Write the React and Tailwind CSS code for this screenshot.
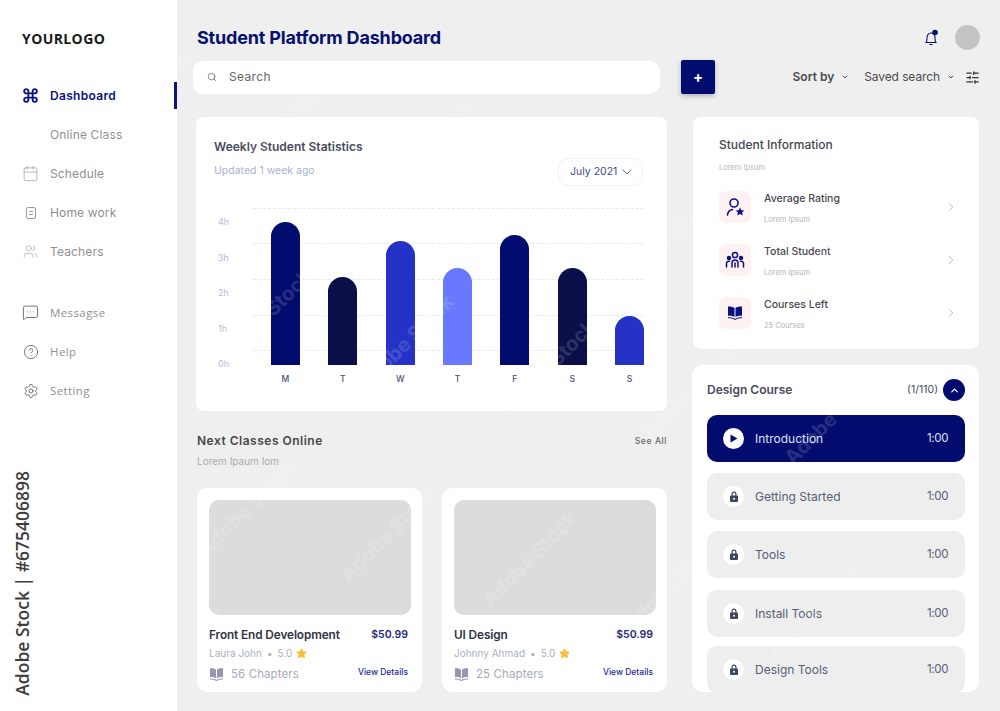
import React from "react";
import { Command, Calendar, Users, MessageSquareMore, CircleHelp, Settings, Search, SlidersHorizontal, ChevronDown, ChevronUp, ChevronRight, Star } from "lucide-react";

const inter = "font-['Inter','Noto_Sans',sans-serif]";

function Doc() {
  return (
    <svg width="14" height="14" viewBox="0 0 14 14" fill="none" stroke="#9a9a9a" strokeWidth="1">
      <rect x="2.5" y="1.5" width="9" height="11" rx="1.5" />
      <path d="M5 5.5h4M5 8.5h4" />
    </svg>
  );
}

function NavItem({ icon, label, active, open }) {
  return (
    <div className="relative flex h-[39px] items-center">
      <div className="flex w-[50px] justify-center pl-[11px]">{icon}</div>
      <span
        className={
          active
            ? "text-[12px] font-semibold tracking-[0.3px] text-[#0b1280]"
            : open
              ? "font-['Open_Sans',sans-serif] text-[11.5px] tracking-[0.4px] text-[#8f8f8f]"
              : "text-[12px] tracking-[0.15px] text-[#8f8f8f]"
        }
      >
        {label}
      </span>
      {active && <div className="absolute right-0 top-[6px] h-[27px] w-[3px] bg-[#0b1280]" />}
    </div>
  );
}

function Sidebar() {
  return (
    <aside className="flex h-[711px] w-[177px] shrink-0 flex-col bg-white">
      <div className="pl-[22px] pt-[29px] font-['Open_Sans',sans-serif] text-[14px] font-bold leading-[20px] tracking-[0.4px] text-[#1a1a1a]">
        YOURLOGO
      </div>
      <nav className="mt-[27px]">
        <NavItem active label="Dashboard" icon={<Command size={17} strokeWidth={2.6} color="#0b1280" />} />
        <NavItem label="Online Class" icon={null} />
        <NavItem label="Schedule" icon={<Calendar size={17} strokeWidth={1} color="#9a9a9a" />} />
        <NavItem label="Home work" icon={<Doc />} />
        <NavItem label="Teachers" icon={<Users size={15} strokeWidth={1} color="#9a9a9a" />} />
      </nav>
      <nav className="mt-[22px]">
        <NavItem open label="Messagse" icon={<MessageSquareMore size={17} strokeWidth={1.3} color="#666666" />} />
        <NavItem open label="Help" icon={<CircleHelp size={16} strokeWidth={1.3} color="#666666" />} />
        <NavItem open label="Setting" icon={<Settings size={16} strokeWidth={1.3} color="#666666" />} />
      </nav>
      <div className="mt-auto mb-[15px] ml-[11px] rotate-180 self-start font-['Open_Sans',sans-serif] text-[17.5px] font-semibold leading-[22px] text-[#3d3d3d] [writing-mode:vertical-rl]">
        Adobe Stock | #675406898
      </div>
    </aside>
  );
}

function Header() {
  return (
    <header className="pr-[20px]">
      <div className="flex h-[60px] items-center justify-between pl-[20px] pt-[15px]">
        <h1 className="text-[18px] font-bold leading-[24px] tracking-[-0.18px] text-[#06106e]">Student Platform Dashboard</h1>
        <div className="flex items-center gap-[15px]">
          <svg width="18" height="18" viewBox="0 0 18 18" fill="none" stroke="#06106e" strokeWidth="1.1">
            <path d="M4 13.5c.8-1 1-2 1-4.5 0-3 1.600-5 4-5s4 2 4 5c0 2.500.2 3.500 1 4.500z" />
            <path d="M7.500 15.500h3" />
            <circle cx="13" cy="3.500" r="2.800" fill="#06106e" stroke="none" />
          </svg>
          <div className="h-[25px] w-[25px] rounded-full bg-[#c4c4c4]" />
        </div>
      </div>
      <div className="flex h-[34px] items-center pl-[16px]">
        <div className="flex h-[33px] w-[467px] items-center rounded-[10px] bg-white pl-[14px]">
          <Search size={10} strokeWidth={1.6} color="#555555" />
          <span className="ml-[12px] text-[12px] tracking-[0.35px] text-[#666666]">Search</span>
        </div>
        <div className="ml-[21px] flex h-[34px] w-[34px] items-center justify-center rounded-[2px] bg-[#020c6e] text-[15px] font-bold text-white shadow-[0_2px_5px_rgba(0,0,0,0.25)]">
          +
        </div>
        <div className="ml-auto flex items-center text-[12px] text-[#4b4b4b]">
          <span className="font-semibold">Sort by</span>
          <ChevronDown size={8} strokeWidth={3} className="ml-[7px]" />
          <span className="ml-[15px] tracking-[-0.1px]">Saved search</span>
          <ChevronDown size={8} strokeWidth={3} className="ml-[7px]" />
          <SlidersHorizontal size={15} strokeWidth={2} color="#333333" className="ml-[10px]" />
        </div>
      </div>
    </header>
  );
}

const bars = [
  { h: "h-[143px]", c: "bg-[#020c6e]", l: "M" },
  { h: "h-[88px]", c: "bg-[#0a0f4a]", l: "T" },
  { h: "h-[124px]", c: "bg-[#2433c6]", l: "W" },
  { h: "h-[97px]", c: "bg-[#6878ff]", l: "T" },
  { h: "h-[130px]", c: "bg-[#020c6e]", l: "F" },
  { h: "h-[97px]", c: "bg-[#0a0f4a]", l: "S" },
  { h: "h-[49px]", c: "bg-[#2433c6]", l: "S" },
];

function Chart() {
  return (
    <section className="h-[294px] rounded-[8px] bg-white pl-[18px] pr-[23px] pt-[21px]">
      <div className="flex items-start justify-between">
        <div>
          <div className="pt-[1px] text-[12px] font-semibold leading-[16px] tracking-[0px] text-[#474b5e]">Weekly Student Statistics</div>
          <div className="mt-[8px] text-[10.5px] leading-[16px] text-[#aab0d6]">Updated 1 week ago</div>
        </div>
        <div className="mr-[1px] mt-[20px] flex h-[28px] w-[85px] items-center justify-between rounded-[10px] border border-[#eef0f6] pl-[11px] pr-[7px] text-[10.5px] text-[#3d4a80]">
          July 2021
          <ChevronDown size={16} strokeWidth={1.2} color="#3d4a80" />
        </div>
      </div>
      <div className="mt-[22px] flex">
        <div className="flex h-[161px] w-[39px] shrink-0 flex-col justify-between pt-[8px] text-[9px] leading-[11px] text-[#b4b9d8]">
          {["4h", "3h", "2h", "1h", "0h"].map((t) => (
            <span key={t} className="pl-[4px]">{t}</span>
          ))}
        </div>
        <div className="flex-1">
          <div className="relative h-[157px]">
            {["top-0", "top-[35px]", "top-[71px]", "top-[107px]", "top-[142px]"].map((t) => (
              <div key={t} className={"absolute left-0 right-0 border-t border-dashed border-[#e6e8f4] " + t} />
            ))}
            <div className="relative flex h-full items-end justify-between pl-[18px]">
              {bars.map((b, i) => (
                <div key={i} className={"w-[29px] rounded-t-full " + b.h + " " + b.c} />
              ))}
            </div>
          </div>
          <div className="mt-[8px] flex justify-between pl-[18px]">
            {bars.map((b, i) => (
              <span key={i} className="w-[29px] text-center text-[8.5px] font-medium leading-[12px] text-[#474f80]">{b.l}</span>
            ))}
          </div>
        </div>
      </div>
    </section>
  );
}

function BookIcon({ size, color }) {
  return (
    <svg width={size} height={size} viewBox="0 0 16 16" fill={color}>
      <path d="M1 1.500c2.500-.2 5 .3 6.500 1.500v9C6 11 3.500 10.500 1 10.700zM15 1.500c-2.500-.2-5 .3-6.500 1.500v9c1.500-1 4-1.500 6.500-1.300z" />
      <path d="M1 12.200c2.500-.2 5 .3 7 1.600 2-1.300 4.500-1.800 7-1.600v1.100c-2.500-.2-5 .3-7 1.700-2-1.400-4.500-1.900-7-1.700z" />
    </svg>
  );
}

function ClassCard({ title, author, chapters }) {
  return (
    <article className="h-[204px] w-[225px] rounded-[10px] bg-white px-[12px] pt-[12px]">
      <div className="h-[115px] w-[202px] rounded-[10px] bg-[#dcdcdc]" />
      <div className="mt-[13px] flex items-center justify-between pr-[2px] leading-[14px]">
        <span className="text-[11.8px] font-semibold tracking-[-0.1px] text-[#2f3445]">{title}</span>
        <span className="text-[10.5px] font-semibold tracking-[0px] text-[#232a78]">$50.99</span>
      </div>
      <div className="mt-[5px] flex items-center text-[10px] leading-[12px] text-[#aab0c4]">
        <span>{author}</span>
        <span className="mx-[5px]">•</span>
        <span>5.0</span>
        <Star size={11} fill="#f8bd3b" color="#f8bd3b" className="ml-[4px]" />
      </div>
      <div className="mt-[7px] flex items-center justify-between pr-[2px]">
        <div className="flex items-center gap-[7px] text-[11.5px] tracking-[0.1px] text-[#a9a9bb]">
          <BookIcon size={15} color="#9a94ad" />
          {chapters}
        </div>
        <span className="mb-[4px] text-[8.5px] font-medium text-[#232a9a]">View Details</span>
      </div>
    </article>
  );
}

function Lock() {
  return (
    <svg width="10" height="11" viewBox="0 0 10 11" fill="#3e4660">
      <path d="M2.500 4.500V3a2.500 2.500 0 0 1 5 0v1.500h.5a1 1 0 0 1 1 1V10a1 1 0 0 1-1 1H2a1 1 0 0 1-1-1V5.500a1 1 0 0 1 1-1zm1.200 0h2.600V3a1.300 1.300 0 0 0-2.600 0z" />
      <circle cx="5" cy="7.700" r="1" fill="#ffffff" />
    </svg>
  );
}

function Lesson({ label, active, className }) {
  return (
    <div
      className={
        "flex h-[47px] items-center rounded-[10px] pl-[16px] pr-[17px] text-[12px] " +
        (active ? "bg-[#020c6e] text-[#dfe1f3] " : "bg-[#eeeeee] text-[#575d75] ") +
        (className || "")
      }
    >
      <span className="flex h-[21px] w-[21px] items-center justify-center rounded-full bg-white">
        {active ? (
          <svg width="9" height="9" viewBox="0 0 9 9" fill="#020c6e"><path d="M1.500.5 8.500 4.500 1.500 8.500z" /></svg>
        ) : (
          <Lock />
        )}
      </span>
      <span className="ml-[11px] flex-1">{label}</span>
      <span className="text-[11.5px] tracking-[-0.4px]">1:00</span>
    </div>
  );
}

function InfoRow({ icon, title, sub }) {
  return (
    <div className="flex h-[53px] items-center">
      <div className="flex h-[32px] w-[32px] items-center justify-center rounded-[7px] bg-[#fdf1f1]">{icon}</div>
      <div className="ml-[13px] flex-1 pt-[4px]">
        <div className="text-[10.5px] font-medium leading-[14px] text-[#45474f]">{title}</div>
        <div className="mt-[9px] text-[7.5px] leading-[10px] text-[#b5b5b5]">{sub}</div>
      </div>
      <ChevronRight size={14} strokeWidth={1} color="#8a8a8a" />
    </div>
  );
}

function StudentInfo() {
  return (
    <section className="ml-[1px] h-[232px] w-[286px] rounded-[8px] bg-white pl-[26px] pr-[21px] pt-[20px]">
      <div className="text-[12px] font-medium leading-[15px] text-[#45474f]">Student Information</div>
      <div className="mt-[11px] mb-[7px] text-[7.5px] leading-[10px] text-[#b5b5b5]">Lorem Ipsum</div>
      <InfoRow
        title="Average Rating"
        sub="Lorem Ipsum"
        icon={
          <svg width="20" height="20" viewBox="0 0 20 20" fill="none" stroke="#0b1280" strokeWidth="1.600">
            <circle cx="9" cy="6" r="4" />
            <path d="M2.500 18c.3-3 2-5 5-5.500" strokeLinecap="round" />
            <path d="m15 10.500 1.300 2.800 3 .3-2.200 2 .6 3-2.700-1.500-2.700 1.500.6-3-2.200-2 3-.3z" fill="#0b1280" stroke="none" />
          </svg>
        }
      />
      <InfoRow
        title="Total Student"
        sub="Lorem Ipsum"
        icon={
          <svg width="20" height="20" viewBox="0 0 20 20" fill="none" stroke="#0b1280" strokeWidth="1.500" strokeLinecap="round">
            <circle cx="10" cy="5" r="2.600" />
            <circle cx="4" cy="8" r="1.500" fill="#0b1280" />
            <circle cx="16" cy="8" r="1.500" fill="#0b1280" />
            <path d="M7 17v-4a3 3 0 0 1 6 0v4M1.500 17v-3.500a2.500 2.500 0 0 1 3-2.300M18.500 17v-3.500a2.500 2.500 0 0 0-3-2.300M10 13v4" />
          </svg>
        }
      />
      <InfoRow title="Courses Left" sub="25 Courses" icon={<BookIcon size={16} color="#0b1280" />} />
    </section>
  );
}

function Course() {
  return (
    <section className="mt-[16px] h-[327px] overflow-hidden rounded-[10px] bg-white pl-[15px] pr-[14px]">
      <div className="flex h-[50px] items-center justify-between">
        <span className="text-[12px] font-semibold text-[#474b5e]">Design Course</span>
        <div className="flex items-center gap-[5px] text-[10.5px] text-[#474b5e]">
          (1/110)
          <span className="flex h-[22px] w-[22px] items-center justify-center rounded-full bg-[#020c6e]">
            <ChevronUp size={11} strokeWidth={3} color="#ffffff" />
          </span>
        </div>
      </div>
      <div className="flex flex-col">
        <Lesson active label="Introduction" />
        <Lesson label="Getting Started" className="mt-[11px]" />
        <Lesson label="Tools" className="mt-[11px]" />
        <Lesson label="Install Tools" className="mt-[12px]" />
        <Lesson label="Design Tools" className="mt-[9px]" />
      </div>
    </section>
  );
}

function Watermark() {
  const items = [];
  for (let r = -2; r < 7; r++) {
    for (let c = -2; c < 9; c++) {
      const x = 424 + (c - 2) * 142 - r * 18;
      const y = 150 + (c - 2) * 25 + r * 192;
      if (x < 70 || x > 930 || y < 70 || y > 640) continue;
      items.push(
        <span
          key={r + "-" + c}
          style={{ left: x - 70, top: y - 12 }}
          className="absolute w-[140px] -rotate-45 whitespace-nowrap text-center text-[20px] font-bold leading-[24px] text-white/[0.14]"
        >
          Adobe Stock
        </span>
      );
    }
  }
  return (
    <div aria-hidden className="pointer-events-none absolute inset-0 overflow-hidden">
      {items}
    </div>
  );
}

export default function App() {
  return (
    <div className={"relative flex h-[711px] w-[1000px] overflow-hidden bg-[#efefef] " + inter}>
      <Sidebar />
      <main className="min-w-0 flex-1">
        <Header />
        <div className="mt-[23px] flex pl-[19px]">
          <div className="w-[471px]">
            <Chart />
            <div className="mt-[22px] flex items-start justify-between pl-[1px]">
              <div>
                <div className="text-[12px] font-semibold leading-[16px] tracking-[0.5px] text-[#474747]">Next Classes Online</div>
                <div className="mt-[5px] text-[10px] leading-[14px] text-[#ababab]">Lorem Ipaum Iom</div>
              </div>
              <span className="text-[8.5px] font-medium leading-[16px] tracking-[0.6px] text-[#666666]">See All</span>
            </div>
            <div className="mt-[20px] flex justify-between pl-[1px]">
              <ClassCard title="Front End Development" author="Laura John" chapters="56 Chapters" />
              <ClassCard title="UI Design" author="Johnny Ahmad" chapters="25 Chapters" />
            </div>
          </div>
          <div className="ml-[25px] w-[287px]">
            <StudentInfo />
            <Course />
          </div>
        </div>
      </main>
      <Watermark />
    </div>
  );
}
